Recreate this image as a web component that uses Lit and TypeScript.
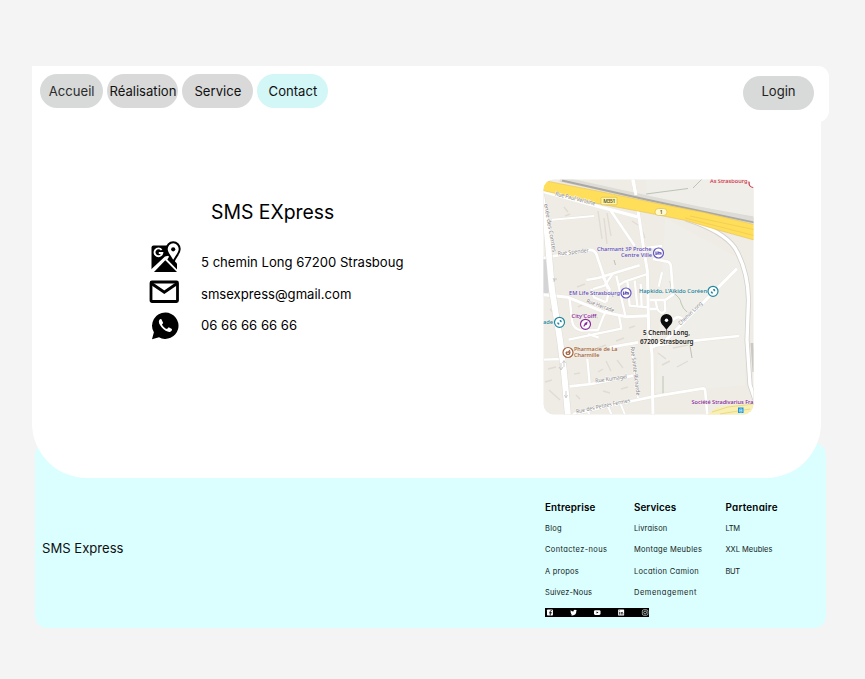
import { LitElement, html, svg, css } from "lit";
import { customElement } from "lit/decorators.js";

type Label = { x: number; y: number; w: number; t: string; k: string; r?: number };

// Street geometry is kept on a grid three times finer than the map itself.
const ROADS: { d: string; w: number }[] = [
  { d: "M285 10L300 110L318 230L328 290L332 470L342 540L345 730", w: 9 },
  { d: "M215 105L290 215", w: 8 },
  { d: "M42 137L168 126", w: 6 },
  { d: "M15 252L150 228Q168 226 175 240L210 345", w: 8 },
  { d: "M145 318L180 312L305 274", w: 8 },
  { d: "M165 345L200 335L225 298M195 310L215 345L205 385M160 345L168 370L204 385", w: 7 },
  { d: "M235 305L262 425M268 320L275 395L330 400M240 335L262 322L328 300M290 320L298 396M308 330L311 398", w: 7 },
  { d: "M345 255L385 262Q399 264 399 280L405 362L382 378", w: 8 },
  { d: "M372 295L362 338M325 222L372 216", w: 7 },
  { d: "M15 362L90 370L200 415L265 428L332 425", w: 9 },
  { d: "M95 375L102 440Q105 465 130 470L180 468L195 430L208 405", w: 7 },
  { d: "M92 497L250 464L243 425M150 480L182 491", w: 7 },
  { d: "M335 378L380 378L382 410Q370 425 358 405L352 378M335 405H355", w: 7 },
  { d: "M215 520L300 505M345 515L470 500L603 486", w: 8 },
  { d: "M15 557L75 555M148 555L155 630", w: 7 },
  { d: "M95 637L160 630L285 605", w: 8 },
  { d: "M105 720L240 690L345 668L495 643Q502 643 502 655L508 725", w: 8 },
  { d: "M210 697L222 725M248 690L262 725M150 712L155 725", w: 6 },
  { d: "M280 520L300 672", w: 5 },
  { d: "M597 284L385 497L342 520", w: 9 },
  { d: "M400 442Q422 420 434 436", w: 8 },
];

const LABELS: Label[] = [
  { x: 555, y: 195.5, w: 41, t: "Rue Paul Verlaine", k: "road", r: 14 },
  { x: 544, y: 204, w: 49, t: "enée des Comtes", k: "road", r: 80 },
  { x: 558, y: 255.5, w: 31, t: "Rue Spender", k: "road", r: -6 },
  { x: 586, y: 302.5, w: 29, t: "Rue Herrade", k: "road", r: 20 },
  { x: 680.5, y: 325.5, w: 31, t: "Chemin Long", k: "road", r: -44 },
  { x: 595.5, y: 382.8, w: 32, t: "Rue Kumagel", k: "road", r: -8 },
  { x: 630.5, y: 347, w: 49, t: "Rue Sainte-Richarde", k: "road", r: 83 },
  { x: 576.5, y: 413.5, w: 55, t: "Rue des Petites Fermes", k: "road", r: -12 },
  { x: 710, y: 183.2, w: 37.5, t: "As Strasbourg", k: "red" },
  { x: 597, y: 251.2, w: 54.5, t: "Charmant 3P Proche", k: "violet" },
  { x: 621, y: 257.2, w: 31, t: "Centre Ville", k: "violet" },
  { x: 569, y: 295.2, w: 51, t: "EM Life Strasbourg", k: "violet" },
  { x: 639, y: 293.2, w: 68, t: "Hapkido, L'Aïkido Coréen", k: "teal" },
  { x: 543, y: 323.7, w: 10, t: "ade", k: "teal" },
  { x: 571.5, y: 317.6, w: 25, t: "City'Coiff", k: "purple" },
  { x: 574, y: 350.8, w: 43.5, t: "Pharmacie de La", k: "brown" },
  { x: 574, y: 357.3, w: 25.5, t: "Charmille", k: "brown" },
  { x: 643, y: 335.3, w: 47, t: "5 Chemin Long,", k: "place" },
  { x: 640, y: 343.8, w: 53.5, t: "67200 Strasbourg", k: "place" },
  { x: 691.5, y: 403.7, w: 62, t: "Société Stradivarius Fra", k: "purple" },
];

const BED = "M-2.5 -1.5V2M-2.5 1H2.5V0L-.5 -1V1";
const SPORT = "M-1.8 1.8L-.6 .6M.6 -.6L1.8 -1.8M-2 .3L-.3 2M.3 -2L2 -.3";
const PINS = [
  { x: 658.5, y: 253, c: "#6658bd", g: BED },
  { x: 626, y: 293, c: "#6658bd", g: BED },
  { x: 713, y: 291.3, c: "#2188a0", g: SPORT },
  { x: 559.5, y: 322.3, c: "#2188a0", g: SPORT },
  { x: 585.5, y: 324.3, c: "#8a2b9c", g: "M-1.8 2L1.2 -1.8M-.8 .6L1 -.2L1.3 -1.8L-.2 -1Z" },
  { x: 568, y: 352.5, c: "#a2633f", g: "M-2 -.3H2Q1.8 2 0 2T-2 -.3M.5 -.5L1.8 -2.3" },
];

const AVENUE = "M541 194L547 232L552 290L560 340L564 372L568 416";
const BEND = "M686 219Q723 231 735 248Q748 270 748.5 300L747 340L750 385L755 400";

@customElement("city-map")
export class CityMap extends LitElement {
  static styles = css`
    :host { display: block; width: 211px; height: 236px; }
    svg { display: block; }
    text { font-family: "Noto Sans", "Open Sans", sans-serif; font-size: 6px; }
    .road { fill: #85827f; font-size: 5.8px; stroke: #fff; stroke-width: 0.9px; paint-order: stroke; }
    .red { fill: #c92a43; font-weight: 500; }
    .violet { fill: #5b4cc0; font-weight: 500; }
    .teal { fill: #167f9d; font-weight: 500; }
    .purple { fill: #83229b; font-weight: 500; }
    .brown { fill: #a05a32; font-weight: 500; }
    .place { fill: #1c1c1c; font-weight: 600; font-size: 6.2px; }
    .halo { stroke: #f4f1ea; stroke-width: 0.8px; paint-order: stroke; }
    .shield { font-size: 5px; font-weight: 600; fill: #544d28; }
  `;
  render() {
    return html`<svg width="211" height="236" viewBox="543 179 211 236" fill="none">
      <defs><clipPath id="frame"><rect x="543.5" y="179.5" width="210" height="235" rx="10" /></clipPath></defs>
      <g clip-path="url(#frame)">
        <rect x="543" y="179" width="211" height="236" fill="#efece5" />
        <path d="M646 180H754V222L646 200ZM665 218L745 262V385L712 388L656 392Z" fill="#f0eee8" />
        <path d="M543 259L550 260L553 286L548 293H543Z" fill="#d4d3d5" />
        <g stroke="#e0dcd4" stroke-width="1.4">
          <path d="M598 211L602 239M607 213L611 236M604 218L607 244M564 207L568 212M565 216L570 214" />
          <path d="M598 348L606 345M616 341L624 338M606 361L611 371M617 360L623 368M545 382L552 380M549 390L560 400M548 369L556 367M603 391L610 393M621 389L628 387M576 395L580 399M574 374L580 373M598 372L603 369" />
          <path d="M673 348L688 345M658 353L666 359M662 365L670 361M677 367L688 361" />
          <path d="M632 221L638 225M642 230L645 238M550 309L554 314M629 328L635 326M578 307L586 303M591 315L598 318M577 287L585 284" />
        </g>
        <path d="M614 260L615.5 265M690 346L692 358M611 291L613 297" stroke="#c3beb5" stroke-width="1" />
        <path d="M688 188.5L646 194M693 188L703 178" stroke="#a3b2a0" stroke-width=".7" />
        <path d="M670 281L672 292Q681 298 681 303Q683 309 687 312M663 376V395M655 395H663" stroke="#adbda6" stroke-width=".8" />
        <path d="M703 209L754 218" stroke="#dddbd6" stroke-width="3" />
        <g transform="translate(538 174) scale(.33333)" stroke-linejoin="round">
          <g stroke="#e7e4dd">${ROADS.map((r) => svg`<path d=${r.d} stroke-width=${r.w + 2.5} />`)}</g>
          <g stroke="#fff">${ROADS.map((r) => svg`<path d=${r.d} stroke-width=${r.w} />`)}</g>
        </g>
        <path d=${AVENUE} stroke="#dfdcd5" stroke-width="7" />
        <path d="M543 191.5L591 204.5L638 217" stroke="#fff" stroke-width="3" />
        <path d=${AVENUE} stroke="#fff" stroke-width="6" />
        <path d=${BEND} stroke="#d3d1cd" stroke-width="5" />
        <path d=${BEND} stroke="#fff" stroke-width="3.4" />
        <path d="M752 343L754 372" stroke="#c9c8c5" stroke-width="3" />
        <path d="M560 179L646 198L756 221.5" stroke="#dedcd6" stroke-width="5.5" />
        <path d="M562 180.5L646 199.5L756 222.8" stroke="#a9a8a3" stroke-width="1.8" />
        <path d="M541 180L600 191.5L655 203L704 212.5L756 225V240.5L720 230.5L686 220.5L646 212.5L595 203L541 190Z" fill="#ffde59" stroke="#e9c65a" stroke-width=".7" />
        <path d="M690 216L756 230M685 218L756 236" stroke="#efc956" stroke-width=".7" />
        <path d="M632.5 179L636 195" stroke="#fff" stroke-width="3" />
        <path d="M706 416L716 408L731 405L756 402V416Z" fill="#f8efb5" />
        <path d="M712 412L728 407L754 404M720 414L750 409" stroke="#e9d985" stroke-width="1" />
        <path d="M553 278L555 281M554 282V279H557M561 363V369M559 367L561 370L563 367M564 361V367M562.5 363L564 360.5L565.5 363M566 391V397M564.5 395L566 398L567.5 395" stroke="#bbb" stroke-width=".7" />
        <rect x="601" y="197.3" width="16" height="7.5" rx="1" fill="#fff3a5" stroke="#d2b54a" stroke-width=".6" />
        <text class="shield" x="603.3" y="203" textLength="12">M351</text>
        <rect x="655" y="208.5" width="12" height="7" rx="3.5" fill="#fff9cd" stroke="#d5b94e" stroke-width=".6" />
        <text class="shield" x="659.8" y="213.8">1</text>
        ${LABELS.map((l) => svg`<text class="${l.k} ${l.k === "road" ? "" : "halo"}" x=${l.x} y=${l.y} textLength=${l.w} lengthAdjust="spacingAndGlyphs" transform="rotate(${l.r ?? 0} ${l.x} ${l.y})">${l.t}</text>`)}
        ${PINS.map((p) => svg`<g transform="translate(${p.x} ${p.y})" stroke=${p.c}><circle r="5" fill="#fff" stroke-width="1.2" /><path d=${p.g} stroke-width="1.2" /></g>`)}
        <circle cx="753.5" cy="183" r="4.5" fill="#fff" stroke="#c92a43" stroke-width="1.2" />
        <path d="M666.5 330C664 325.5 660.5 324.5 660.5 320A6 6 0 0 1 672.5 320C672.5 324.5 669 325.5 666.5 330Z" fill="#0c0c0c" />
        <circle cx="666.5" cy="320.3" r="1.7" fill="#fff" />
        <rect x="738" y="407.5" width="5.5" height="5.5" fill="#1596e4" />
        <path d="M739.7 409H742V412H739.7ZM739.7 410.5H742" stroke="#e4f5ff" stroke-width=".6" />
      </g>
    </svg>`;
  }
}

const COLUMNS: { title: string; track: number; links: [string, number][] }[] = [
  { title: "Entreprise", track: 0.15, links: [["Blog", 0.25], ["Contactez-nous", 0.36], ["A propos", 0.22], ["Suivez-Nous", 0.15]] },
  { title: "Services", track: 0.05, links: [["Livraison", 0.12], ["Montage Meubles", 0.27], ["Location Camion", 0.31], ["Demenagement", 0.53]] },
  { title: "Partenaire", track: 0.22, links: [["LTM", -0.25], ["XXL Meubles", 0], ["BUT", -0.3]] },
];

@customElement("app-root")
export class AppRoot extends LitElement {
  static styles = css`
    :host {
      display: block; box-sizing: border-box; height: 679px; padding: 65.5px 36px 0 32.4px;
      background: #f4f4f4; color: #111; font-family: Inter, sans-serif; overflow: hidden;
    }
    * { box-sizing: border-box; }
    header {
      display: flex; gap: 4px; width: 796.6px; height: 56px; padding: 8.4px 15px 0 7.5px;
      background: #fff; border-radius: 0 11px 11px 0;
    }
    .pill {
      display: flex; align-items: center; justify-content: center; width: 71px; height: 34px;
      border-radius: 17px; background: #d9d9d9; font-size: 13.1px; white-space: nowrap;
    }
    .home { width: 63.5px; background: #d7dad9; color: #2b2b2b; }
    .active { background: #d3f6f6; }
    .login { margin: 2.3px 0 0 auto; background: #d7dad9; color: #222; padding-bottom: 4px; }
    main {
      position: relative; display: flex; justify-content: space-between; width: 789px; height: 368.8px;
      margin-top: -12px; padding: 69.5px 67.4px 0 116px; background: #fff; border-radius: 0 0 55px 55px;
    }
    .contact { width: 300px; padding-top: 21.2px; }
    h1 { margin: 0 0 15.8px 62.6px; font-size: 19.4px; line-height: 25px; font-weight: 400; color: #000; }
    .line { display: flex; align-items: center; height: 32px; font-size: 13.1px; color: #000; }
    .line svg { width: 32px; height: 32px; margin: 0 20px 0 0.6px; flex: none; }
    .first { height: 33px; }
    .first span { padding-top: 9px; }
    .mail { height: 37px; }
    .mail span { padding-top: 3px; }
    .phone { height: 31px; }
    .phone span { padding-bottom: 2.5px; }
    footer {
      display: flex; justify-content: space-between; width: 790.5px; height: 185px; margin: -35px 0 0 3.1px;
      padding: 57.4px 48.5px 0 6.5px; border-radius: 12px; background: #dbfeff;
    }
    .brand { margin-top: 39.4px; font-size: 13.1px; line-height: 17px; }
    .links { display: grid; grid-template-columns: 89px 91.5px 52px; align-content: start; }
    .col { display: flex; flex-direction: column; font-feature-settings: "cv11"; white-space: nowrap; }
    h2 { margin: 0 0 7.3px; font-size: 9.9px; line-height: 13px; font-weight: 600; color: #000; }
    a { height: 21.4px; font-size: 7.5px; line-height: 15px; color: #101c20; }
    .social { display: block; width: 104.5px; height: 9px; margin-top: 1.2px; grid-column: 1 / 3; }
  `;
  render() {
    return html`
      <header>
        <div class="pill home">Accueil</div>
        <div class="pill">Réalisation</div>
        <div class="pill">Service</div>
        <div class="pill active">Contact</div>
        <div class="pill login">Login</div>
      </header>
      <main>
        <section class="contact">
          <h1>SMS EXpress</h1>
          <div class="line first">
            <svg viewBox="0 0 32 32">
              <path d="M4.5 4.5H24V30.5H4.5Q2.5 30 2.5 28V6.5Q2.5 4.500 4.5 4.5Z" />
              <path d="M16 15.5L2 28.5V32H31V12Z" fill="#fff" />
              <path d="M16.3 19.3L28 31H5Z" />
              <path d="M20.5 15L28 22.500V28.5L18.3 18.5Z" />
              <path d="M12.6 9A3.9 3.9 0 1 0 13.3 12H9.8" fill="none" stroke="#fff" stroke-width="1.9" />
              <path d="M24.2 22C23.5 16.5 17.7 13.5 17.7 8A6.5 6.8 0 0 1 30.7 8C30.7 13.5 24.9 16.5 24.2 22Z" fill="#fff" stroke="#000" stroke-width="2" />
              <circle cx="24.2" cy="8.3" r="2.1" />
            </svg>
            <span>5 chemin Long 67200 Strasboug</span>
          </div>
          <div class="line mail">
            <svg viewBox="0 0 32 32">
              <rect x="2" y="6" width="26.5" height="19.5" rx="1" fill="none" stroke="#000" stroke-width="2.8" />
              <path d="M2.5 7.5L15.3 16.2L28 7.5" fill="none" stroke="#000" stroke-width="3" />
            </svg>
            <span>smsexpress@gmail.com</span>
          </div>
          <div class="line phone">
            <svg viewBox="0 0 32 32">
              <path d="M16.4 2.5A13.2 13.2 0 1 1 10 27.3L3 29.3L4.9 22.3A13.2 13.2 0 0 1 16.4 2.5Z" />
              <path d="M12.4 9.2C11.8 8.6 10.8 9.2 10.3 10C9.1 12 10.3 14.5 12.8 17.5C15.5 20.7 19.5 22.5 21.3 21.7C22.5 21.2 23.2 20 22.9 18.9L19.7 17.3L18 19.1C16 18.5 13.8 16.3 13 14.5L14.2 12.9Z" fill="#fff" />
            </svg>
            <span>06 66 66 66 66</span>
          </div>
        </section>
        <city-map></city-map>
      </main>
      <footer>
        <div class="brand">SMS Express</div>
        <div class="links">
          ${COLUMNS.map(
            (c) => html`<div class="col">
              <h2 style="letter-spacing:${c.track}px">${c.title}</h2>
              ${c.links.map(([name, track]) => html`<a style="letter-spacing:${track}px">${name}</a>`)}
            </div>`,
          )}
          <svg class="social" viewBox="0 0 105 9" preserveAspectRatio="none">
            <rect width="105" height="9" />
            <g fill="#fff">
              <rect x="2" y="1.5" width="6" height="6" rx=".8" />
              <path d="M5.3 7.5V3.4Q5.3 2.6 6.5 2.6H7M4.2 4.8H7" fill="none" stroke="#000" stroke-width=".9" />
              <path d="M25.8 2.2Q27 3.6 28.6 3.6Q28.5 1.7 30 1.7Q30.7 1.7 31.1 2.1L31.9 1.9L31.5 2.7Q31.5 7.3 27.6 7.4Q26.3 7.4 25.5 6.8Q26.7 6.8 27.2 6.3Q26 6 26 5.2H26.4Q25.5 4.5 25.6 3.8L26 3.9Q25.4 3 25.8 2.2Z" />
              <rect x="49.2" y="2.2" width="6.6" height="4.7" rx="1.3" />
              <path d="M51.8 3.5L53.7 4.5L51.8 5.6Z" fill="#000" />
              <rect x="73.5" y="1.5" width="6" height="6" rx=".5" />
              <path d="M75 4V6.6M76.6 6.6V4M76.6 5Q78.2 3.7 78.2 5V6.6M75 2.5V3.2" fill="none" stroke="#000" stroke-width=".75" />
            </g>
            <g fill="none" stroke="#fff" stroke-width=".6">
              <rect x="97.8" y="1.7" width="5.6" height="5.6" rx="1.5" />
              <circle cx="100.6" cy="4.5" r="1.4" />
              <path d="M102 2.8H102.5" />
            </g>
          </svg>
        </div>
      </footer>
    `;
  }
}
